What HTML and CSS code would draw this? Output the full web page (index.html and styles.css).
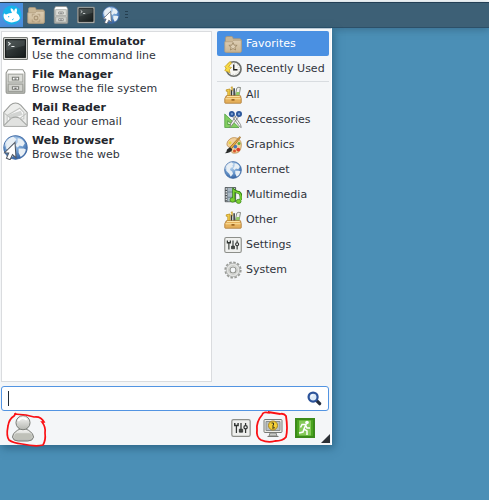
FILE: index.html
```html
<!DOCTYPE html>
<html lang="en">
<head>
<meta charset="utf-8">
<title>Applications Menu</title>
<link rel="stylesheet" href="styles.css">
</head>
<body>
<svg class="defs" aria-hidden="true">
  <defs>
    <linearGradient id="metal" x1="0" y1="0" x2="0" y2="1"><stop offset="0" stop-color="#fafaf8"/><stop offset="1" stop-color="#b4b6b0"/></linearGradient>
    <linearGradient id="dark" x1="0" y1="0" x2="1" y2="1"><stop offset="0" stop-color="#434a4a"/><stop offset="1" stop-color="#161c1c"/></linearGradient>
    <radialGradient id="ocean" cx=".4" cy=".25" r=".8"><stop offset="0" stop-color="#c5dcf2"/><stop offset=".55" stop-color="#6d9bcf"/><stop offset="1" stop-color="#2c5a9b"/></radialGradient>
    <linearGradient id="tan" x1="0" y1="0" x2="0" y2="1"><stop offset="0" stop-color="#dccdb3"/><stop offset="1" stop-color="#c9b594"/></linearGradient>
  </defs>
  <symbol id="terminal" viewBox="0 0 24 24">
    <rect x=".5" y="1.500" width="23" height="21" rx="1" fill="#d4d5d0" stroke="#777a76"/>
    <rect x="2.500" y="3.500" width="19" height="17" fill="url(#dark)" stroke="#101414"/>
    <path d="M3 4h18v5L3 14z" fill="#7d8787" opacity=".25"/>
    <path d="M5 6l2 1.500-2 1.500M8 10h3" fill="none" stroke="#e8ecec"/>
  </symbol>
  <symbol id="cabinet" viewBox="0 0 24 24">
    <path d="M5 .7h14l2 3V22q0 1.300-1.300 1.300H4.300Q3 23.300 3 22V3.700z" fill="url(#metal)" stroke="#90928d"/>
    <path d="M5 1.500h14l1 2.500H4z" fill="#fff"/>
    <rect x="5" y="5" width="14" height="7.500" fill="#dcddd8" stroke="#a5a7a1"/>
    <rect x="5" y="14.500" width="14" height="7" fill="#d2d3ce" stroke="#9b9d97"/>
    <path d="M9 8h6v2.500H9zM9 17h6v2.500H9z" fill="#fff" stroke="#777a74"/>
    <path d="M11 9.500h2M11 18.500h2" stroke="#444"/>
  </symbol>
  <symbol id="mail" viewBox="0 0 24 24">
    <path d="M.8 10L7 3q5-4 10 0l6.200 7v12.500q0 .8-.8.800H1.600q-.8 0-.8-.8z" fill="#ecedeb" stroke="#999b98"/>
    <path d="M4 13l12-7 4 4v6l-8 1-8 5z" fill="#fafafa" stroke="#c3c5c2"/>
    <path d="M5 12.500l12-4 2 4-13 4z" fill="#d2d4d2"/>
    <path d="M1 22.500l7-7q4-2 8 0l7 7" fill="#e1e2e0" stroke="#a5a7a4"/>
    <path d="M1.500 11L8 16M22.500 11L16 16" stroke="#bfc1be" fill="none"/>
  </symbol>
  <symbol id="globe" viewBox="0 0 24 24">
    <circle cx="12" cy="12" r="11.200" fill="url(#ocean)" stroke="#416ca6"/>
    <path d="M3 7q3-4 7-5l3 2-2 2 1 2-3 1-1 3 3 2 1 3-3 4-2-4-4-4zM14 3q5 0 7 5l-2 3-3-1-2 2-2-2 2-3zM15 13l5 0 2 1q-1 5-5 7l-2-4z" fill="#e8eff5"/>
    <path d="M2 11q0-7 8-9" fill="none" stroke="#fff" opacity=".6"/>
  </symbol>
  <symbol id="web" viewBox="0 0 24 24">
    <use href="#globe"/>
    <path d="M11.500 7L1.500 17l4 .3-2.200 5 3.500 1.500 2.300-5 3.400 3z" fill="#fff" stroke="#515863"/>
  </symbol>
  <symbol id="folder" viewBox="0 0 24 24">
    <path d="M2 4q0-2 2-2h6q2 0 2 2v1h9q2 0 2 2v14q0 2-2 2H4q-2 0-2-2z" fill="#c9b797" stroke="#a99678"/>
    <path d="M1 9h10l2-2h10v15q0 1-1 1H2q-1 0-1-1z" fill="url(#tan)" stroke="#b09d7e"/>
  </symbol>
  <symbol id="home" viewBox="0 0 24 24">
    <use href="#folder"/><path d="M7 14v-3h3M14 11h3v3M17 18v3h-3M10 21H7v-3" fill="none" stroke="#ab9778"/><circle cx="12" cy="16" r="2.500" fill="none" stroke="#ab9778" stroke-width="1.500"/>
  </symbol>
  <symbol id="favorite" viewBox="0 0 24 24">
    <use href="#folder"/><path d="M12 10l1.500 3.500 4 .3-3 2.500 1 3.700-3.500-2-3.500 2 1-3.700-3-2.500 4-.3z" fill="#ddceb4" stroke="#94805f"/>
  </symbol>
  <symbol id="recent" viewBox="0 0 24 24">
    <circle cx="13" cy="12" r="9.700" fill="#f6f6f3" stroke="#6b6e6b" stroke-width="2.200"/>
    <circle cx="13" cy="12" r="7.300" fill="none" stroke="#8b8d88" stroke-dasharray="1 2.820"/>
    <path d="M13 6v7h5" fill="none" stroke="#222" stroke-width="1.800"/>
    <path d="M8 2L1 9l2 2-2 3 7 3-1-4 3-3-4-1 4-5z" fill="#f8db45" stroke="#c9a224"/>
  </symbol>
  <symbol id="toolbox" viewBox="0 0 24 24">
    <path d="M10 14V5M13.500 14V3" stroke="#343a38" stroke-width="2"/>
    <path d="M3 5l5-1v10H5V7H3zM9 2l2-1v6" fill="#f3cd4a" stroke="#b98f1d"/>
    <path d="M15 13l2-10q1-2 5-1l-2 11z" fill="#eef0ec" stroke="#686d66"/><path d="M16.500 8h4.500l-1 5h-4.500z" fill="#8fc765"/>
    <path d="M3 13h19l1 4v5q0 1-1 1H2q-1 0-1-1v-5z" fill="#e5b05b" stroke="#a8742c"/>
    <path d="M2 17h20M4 14h17" stroke="#fbe2a1" stroke-width="1.500"/><path d="M10 17.500h4v2h-4z" fill="#925c1b"/>
  </symbol>
  <symbol id="accessories" viewBox="0 0 24 24">
    <path d="M1 4v18h19z" fill="#83ce61" stroke="#4b9c3e"/><path d="M5 13v5h6z" fill="#d9f2cc" stroke="#419234"/>
    <path d="M11 7l10 14 2 1-1-4-8-12M20 7L9 21l-1 1 1-5 7-11" fill="#f6f6f4" stroke="#737674"/>
    <circle cx="10.500" cy="4" r="2.800" fill="#7199cc" stroke="#2b569a" stroke-width="2.400"/><circle cx="20" cy="4" r="2.800" fill="#7199cc" stroke="#2b569a" stroke-width="2.400"/>
  </symbol>
  <symbol id="graphics" viewBox="0 0 24 24">
    <path d="M5 7Q10 0 18 3q6 3 5 11-1 9-9 9-5 0-4-4 1-4-3-4-5-2-2-8z" fill="#f2d09a" stroke="#b98a4a"/>
    <circle cx="8" cy="9" r="2" fill="#e9d340"/><circle cx="20" cy="10" r="2" fill="#60ae37"/><circle cx="15" cy="14" r="2.500" fill="#4478bc"/><circle cx="19" cy="18" r="2.500" fill="#d83d2b"/><circle cx="14" cy="20" r="2" fill="#d9532c"/>
    <path d="M21 .8L8 15l2 2L22 2z" fill="#efb041" stroke="#8e622a"/><path d="M8 15l3 3q-2 5-10 5 3-2 3-5z" fill="#2a2c2b"/>
  </symbol>
  <symbol id="multimedia" viewBox="0 0 24 24">
    <path d="M1.500 2h14v19h-14z" fill="#a9b8c4" stroke="#4a5053"/><path d="M3 2v19M14 2v19" stroke="#4a5053" stroke-width="3"/><path d="M3 3v18M14 3v18" stroke="#fff" stroke-width="1.500" stroke-dasharray="2 1.500"/><path d="M5 8h8M5 15h8" stroke="#5d7180"/>
    <path d="M13 16.500V5.500q4 3 7 3 4 3 2.500 10" fill="none" stroke="#358415" stroke-width="4"/><ellipse cx="11.500" cy="18.500" rx="3.500" ry="3" fill="#7cd132" stroke="#358415"/><ellipse cx="19.500" cy="20.500" rx="3.200" ry="2.700" fill="#7cd132" stroke="#358415"/>
    <path d="M13 17V6q4 3 7 3 4 3 2 10" fill="none" stroke="#7cd132" stroke-width="2"/>
  </symbol>
  <symbol id="settings" viewBox="0 0 24 24">
    <rect x="1" y="2" width="22" height="20" rx="2" fill="#eff0ee" stroke="#8d8f8a" stroke-width="1.500"/>
    <path d="M6.500 9v9M12 6v10M17.500 6v12" stroke="#333735" stroke-width="1.500"/><path d="M4.500 6v3h4V6" fill="none" stroke="#303432" stroke-width="1.700"/><path d="M10 13.500h4v3.500h-4z" fill="#454946" stroke="#303432"/><circle cx="17.500" cy="11" r="2" fill="#eee" stroke="#303432" stroke-width="1.500"/>
  </symbol>
  <symbol id="system" viewBox="0 0 24 24">
    <circle cx="12" cy="12" r="10.200" fill="none" stroke="#9a9c98" stroke-width="2.600" stroke-dasharray="3.300 2.040"/>
    <circle cx="12" cy="12" r="9" fill="#e2e3e1" stroke="#a6a8a5"/><circle cx="12" cy="12" r="6" fill="#eeefed" stroke="#c3c5c2"/><circle cx="12" cy="12" r="4" fill="#f4f6f8" stroke="#92948f" stroke-width="1.500"/>
  </symbol>
</svg>

<header class="panel">
  <button class="launcher launcher-active" aria-label="Applications">
    <svg class="mouse" viewBox="0 0 24 24"><circle cx="12" cy="12" r="11.500" fill="#16b4ea"/><path d="M2.500 10q1 1.500 3 1.200 3-1.700 6.500-1.700-2.500-3-1.500-5.500 2.500 0 4 4 0-3 2.500-4.500 2 2 .5 6 3.500 2 4 6-1 4-6 4.500-5 2-9-.5-4-1.500-4.500-5Q1.500 12 2.500 10z" fill="#fff"/><circle cx="8" cy="14" r=".8" fill="#16b4ea"/><path d="M12 18l2-1.500" stroke="#16b4ea"/></svg>
  </button>
  <button class="launcher" aria-label="Home"><svg class="panel-icon"><use href="#home"/></svg></button>
  <button class="launcher" aria-label="File Manager"><svg class="panel-icon"><use href="#cabinet"/></svg></button>
  <button class="launcher" aria-label="Terminal"><svg class="panel-icon"><use href="#terminal"/></svg></button>
  <button class="launcher" aria-label="Web Browser"><svg class="panel-icon"><use href="#web"/></svg></button>
  <span class="handle"></span>
</header>

<main class="menu">
  <div class="content">
    <div class="apps">
      <button class="app"><svg class="app-icon"><use href="#terminal"/></svg><span class="app-text"><strong>Terminal Emulator</strong><span>Use the command line</span></span></button>
      <button class="app"><svg class="app-icon"><use href="#cabinet"/></svg><span class="app-text"><strong>File Manager</strong><span>Browse the file system</span></span></button>
      <button class="app"><svg class="app-icon"><use href="#mail"/></svg><span class="app-text"><strong>Mail Reader</strong><span>Read your email</span></span></button>
      <button class="app"><svg class="app-icon"><use href="#web"/></svg><span class="app-text"><strong>Web Browser</strong><span>Browse the web</span></span></button>
    </div>
    <nav class="categories" aria-label="Categories">
      <button class="category category-selected"><svg class="category-icon"><use href="#favorite"/></svg>Favorites</button>
      <button class="category"><svg class="category-icon"><use href="#recent"/></svg>Recently Used</button>
      <hr class="separator">
      <button class="category"><svg class="category-icon"><use href="#toolbox"/></svg>All</button>
      <button class="category"><svg class="category-icon"><use href="#accessories"/></svg>Accessories</button>
      <button class="category"><svg class="category-icon"><use href="#graphics"/></svg>Graphics</button>
      <button class="category"><svg class="category-icon"><use href="#globe"/></svg>Internet</button>
      <button class="category"><svg class="category-icon"><use href="#multimedia"/></svg>Multimedia</button>
      <button class="category"><svg class="category-icon"><use href="#toolbox"/></svg>Other</button>
      <button class="category"><svg class="category-icon"><use href="#settings"/></svg>Settings</button>
      <button class="category"><svg class="category-icon"><use href="#system"/></svg>System</button>
    </nav>
  </div>
  <div class="search">
    <span class="caret"></span>
    <input class="search-input" type="text" aria-label="Search">
    <svg class="search-icon" viewBox="0 0 16 16"><path d="M10 10l3.500 3.500" stroke="#252d3d" stroke-width="3.500" stroke-linecap="round"/><circle cx="6.500" cy="6.500" r="4.800" fill="#dce9f7" stroke="#2c539a" stroke-width="2.400"/><path d="M4.500 6q0-2 2-2" fill="none" stroke="#fff"/></svg>
  </div>
  <footer class="actions">
    <button class="action user" aria-label="User">
      <svg class="user-icon" viewBox="0 0 24 28"><path d="M6 16q6-4 12 0 5 3 5 7-1 4-6 4H7q-5 0-6-4 0-4 5-7z" fill="url(#metal)" stroke="#777a75"/><path d="M5 19h14q3 1 2 4-1 2-3 2H6q-3 0-3-3 0-2 2-3z" fill="#bfc1b9"/><circle cx="12" cy="8" r="7.300" fill="url(#metal)" stroke="#777a75"/><path d="M7 6q4-5 9-1" fill="none" stroke="#fff" stroke-width="2"/></svg>
      <svg class="mark mark-user" viewBox="0 0 42 36"><path d="M10 1l-2 3Q3 7 2 14q-2 10 1 14 4 3 13 4 14 3 21 1 3-5 2-12 1-6-3-11l2 0Q35 4 28 5L20 3 8 2" fill="none" stroke="#fb1014" stroke-width="1.700"/></svg>
    </button>
    <button class="action" aria-label="Settings"><svg class="action-icon"><use href="#settings"/></svg></button>
    <button class="action" aria-label="Lock Screen">
      <svg class="action-icon" viewBox="0 0 20 20"><path d="M7 15h6l1 3H6z" fill="#c8cac6" stroke="#858783"/><rect x="1" y="1.500" width="18" height="13" rx="1" fill="#ecece7" stroke="#777a76"/><path d="M3 3.500h14v9H3z" fill="#b9bfc1" stroke="#878e90"/><circle cx="10" cy="7.500" r="4.500" fill="#f4cf35" stroke="#a68428"/><path d="M8.500 5h2v2l-1 1 2 2H9" fill="none" stroke="#34301e"/><path d="M4.500 18.500h11" stroke="#777a76"/></svg>
      <svg class="mark mark-lock" viewBox="0 0 34 34"><path d="M15 3Q8 1 7 5 1 12 2 20q-1 7 4 10 7 3 14 1 8 0 11-4 2-8 0-21Q29 3 25 4L13 2" fill="none" stroke="#fb1014" stroke-width="1.800"/></svg>
    </button>
    <button class="action" aria-label="Log Out"><svg class="action-icon" viewBox="0 0 20 20"><rect x="1" y="1" width="18" height="18" fill="#4aa51f" stroke="#3b8a1a" stroke-width="2"/><path d="M4 2.500h12v15H4z" fill="#86c95a"/><circle cx="12" cy="4.500" r="1.800" fill="#fff"/><path d="M5.500 9.500l1.500-3h4L9 11l3 2v4M10.500 7l1.500 3h3M9 11l-1 3-4 1" fill="none" stroke="#fff" stroke-width="1.500"/></svg></button>
    <span class="grip"></span>
  </footer>
</main>
</body>
</html>
```
FILE: styles.css
```css
* { box-sizing: border-box; }

body {
  margin: 0;
  min-height: 100vh;
  padding-top: 2px;
  background: linear-gradient(#fff 2px, #4b8fb6 2px);
  color: #30343c;
  font: 12px/14px "DejaVu Sans", sans-serif;
}

button {
  border: 0;
  margin: 0;
  padding: 0;
  background: none;
  color: inherit;
  font: inherit;
  text-align: left;
}

svg { display: block; flex: none; overflow: visible; }
.defs { position: absolute; width: 0; height: 0; }

.panel {
  display: flex;
  align-items: center;
  height: 26px;
  background: #3d6076;
  border-top: 1px solid #233f55;
  border-bottom: 1px solid #2c5069;
  box-shadow: 0 2px 7px #315f7a99;
}
.launcher { display: grid; place-items: center; width: 25px; height: 24px; }
.launcher-active { width: 23px; background: #4a90df; }
.mouse { width: 20px; height: 20px; }
.panel-icon { width: 18px; height: 18px; }
.handle {
  width: 3px;
  height: 8px;
  margin-left: 2px;
  background: repeating-linear-gradient(#253f50 0 1px, transparent 1px 3px);
}

.menu {
  position: relative;
  width: 68%;
  max-width: 332px;
  min-width: 331px;
  padding: 2px 2px 0 1px;
  background: #f4f6f8;
  border-top: 1px solid #b9c9d5;
  border-right: 1px solid #fff;
  box-shadow: 2px 3px 8px #194b6899;
}
.content { display: flex; gap: 5px; }
.apps {
  flex: 1;
  min-height: 351px;
  padding: 0 1px;
  background: #fff;
  border: 1px solid #dadcdf;
}
.app { display: flex; align-items: center; gap: 4px; width: 100%; height: 33px; }
.app-icon { width: 25px; height: 25px; }
.app-text { display: flex; flex-direction: column; font-size: 11px; white-space: nowrap; }
.app-text strong { color: #23262c; }

.categories { width: 112px; }
.category {
  display: flex;
  align-items: center;
  gap: 4px;
  width: 100%;
  height: 25px;
  padding-left: 7px;
  font-size: 11px;
  white-space: nowrap;
}
.category-selected { background: #4a90e2; color: #fff; border-radius: 2px; }
.category-icon { width: 18px; height: 18px; }
.separator { height: 1px; margin: 0; border: 0; background: #d8dce0; }

.search {
  display: flex;
  align-items: center;
  height: 25px;
  margin-top: 4px;
  padding: 0 6px;
  background: #fff;
  border: 1px solid #5294e2;
  border-radius: 3px;
}
.caret { width: 1px; height: 15px; background: #202a35; }
.search-input {
  flex: 1;
  min-width: 0;
  border: 0;
  outline: 0;
  background: none;
  font: inherit;
}
.search-icon { width: 15px; height: 15px; }

.actions {
  display: flex;
  align-items: center;
  gap: 12px;
  height: 34px;
  padding: 0 14px 0 10px;
}
.action { position: relative; }
.user { margin-right: auto; }
.user-icon { width: 24px; height: 27px; }
.action-icon { width: 20px; height: 20px; }
.mark { position: absolute; }
.mark-user { width: 42px; height: 36px; left: -5px; top: -3px; }
.mark-lock { width: 34px; height: 34px; left: -8px; top: -8px; }
.grip {
  position: absolute;
  right: 1px;
  bottom: 2px;
  width: 9px;
  height: 9px;
  background: #2c3036;
  clip-path: polygon(100% 0, 100% 100%, 0 100%);
}
```
